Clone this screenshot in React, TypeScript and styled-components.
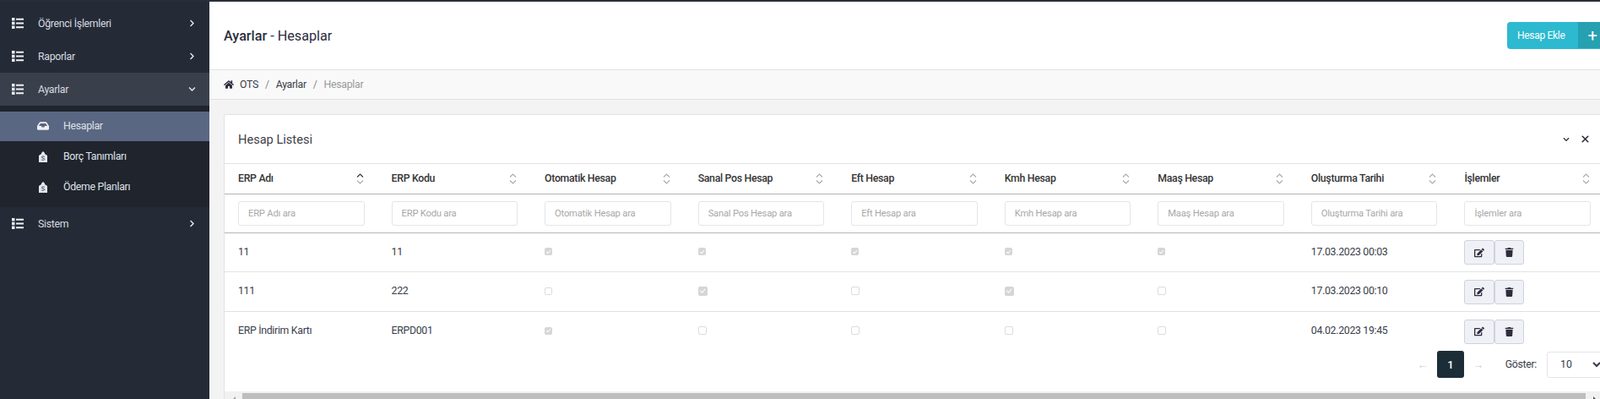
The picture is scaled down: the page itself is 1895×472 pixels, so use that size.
import styled, { createGlobalStyle } from "styled-components";
import { FaChevronDown, FaChevronRight, FaEdit, FaHome, FaInbox, FaTrash } from "react-icons/fa";
import { FiX } from "react-icons/fi";

const GlobalStyle = createGlobalStyle`
    html, body {
        margin: 0;
        height: 472px;
        overflow: hidden;
        background: #f3f3f3;
    }
    * {
        box-sizing: border-box;
    }
    body {
        font-family: Roboto, "Liberation Sans", sans-serif;
        font-size: 12.3px;
        letter-spacing: -0.3px;
        color: #333;
    }
`;

type Flag = { on: boolean; size: number };

type Account = {
    name: string;
    code: string;
    flags: Flag[];
    date: string;
};

const columns = ["ERP Adı", "ERP Kodu", "Otomatik Hesap", "Sanal Pos Hesap", "Eft Hesap", "Kmh Hesap", "Maaş Hesap", "Oluşturma Tarihi", "İşlemler"];

const accounts: Account[] = [
    {
        name: "11",
        code: "11",
        flags: [{ on: true, size: 9 }, { on: true, size: 9 }, { on: true, size: 9 }, { on: true, size: 9 }, { on: true, size: 9 }],
        date: "17.03.2023 00:03",
    },
    {
        name: "111",
        code: "222",
        flags: [{ on: false, size: 9 }, { on: true, size: 11 }, { on: false, size: 10 }, { on: true, size: 11 }, { on: false, size: 10 }],
        date: "17.03.2023 00:10",
    },
    {
        name: "ERP İndirim Kartı",
        code: "ERPD001",
        flags: [{ on: true, size: 9 }, { on: false, size: 10 }, { on: false, size: 10 }, { on: false, size: 10 }, { on: false, size: 10 }],
        date: "04.02.2023 19:45",
    },
];

function ListIcon() {
    return (
        <svg width="14" height="13" viewBox="0 0 14 13" fill="#eef0f4">
            <rect x="0" y="0" width="3.5" height="3.5" />
            <rect x="0" y="4.75" width="3.5" height="3.5" />
            <rect x="0" y="9.5" width="3.5" height="3.5" />
            <rect x="5" y="0.75" width="9" height="2" />
            <rect x="5" y="5.5" width="9" height="2" />
            <rect x="5" y="10.25" width="9" height="2" />
        </svg>
    );
}

function TagIcon() {
    return (
        <svg width="10" height="13" viewBox="0 0 10 13">
            <path d="M5 0 L7 2 L7 3 L10 5 L10 13 L0 13 L0 5 L3 3 L3 2 Z" fill="#e4e7ec" />
            <path d="M6.8 6.4 C6 5.6 3.4 5.6 3.4 7 C3.4 8.4 6.8 7.8 6.8 9.3 C6.8 10.6 4 10.6 3.2 9.8" fill="none" stroke="#4a5060" strokeWidth="1" />
        </svg>
    );
}

function SortIcon({ active }: { active: boolean }) {
    return (
        <SortSvg width="9" height="13" viewBox="0 0 9 13">
            <path d="M1 4.5 L4.5 1 L8 4.5" fill="none" stroke={active ? "#333" : "#aaa"} strokeWidth="1.1" />
            <path d="M1 8.5 L4.5 12 L8 8.5" fill="none" stroke="#aaa" strokeWidth="1.1" />
        </SortSvg>
    );
}

function App() {
    return (
        <Page>
            <GlobalStyle />
            <Sidebar>
                <MenuItem><ListIcon /><MenuLabel>Öğrenci İşlemleri</MenuLabel><FaChevronRight size={9} /></MenuItem>
                <MenuItem><ListIcon /><MenuLabel>Raporlar</MenuLabel><FaChevronRight size={9} /></MenuItem>
                <MenuItem $open><ListIcon /><MenuLabel>Ayarlar</MenuLabel><FaChevronDown size={9} /></MenuItem>
                <SubMenu>
                    <SubItem $active><SubIcon><FaInbox size={14} /></SubIcon>Hesaplar</SubItem>
                    <SubItem><SubIcon><TagIcon /></SubIcon>Borç Tanımları</SubItem>
                    <SubItem><SubIcon><TagIcon /></SubIcon>Ödeme Planları</SubItem>
                </SubMenu>
                <MenuItem><ListIcon /><MenuLabel>Sistem</MenuLabel><FaChevronRight size={9} /></MenuItem>
            </Sidebar>
            <Main>
                <Header>
                    <Title><strong>Ayarlar</strong> - Hesaplar</Title>
                    <AddButton>
                        <AddText>Hesap Ekle</AddText>
                        <AddIcon>+</AddIcon>
                    </AddButton>
                </Header>
                <Breadcrumb>
                    <FaHome size={12} color="#2c2e3e" />
                    <Crumb>OTS</Crumb>
                    <Slash>/</Slash>
                    <Crumb>Ayarlar</Crumb>
                    <Slash>/</Slash>
                    <Crumb $muted>Hesaplar</Crumb>
                </Breadcrumb>
                <Content>
                    <Card>
                        <CardHead>
                            <CardTitle>Hesap Listesi</CardTitle>
                            <CardTools>
                                <FaChevronDown size={8} />
                                <FiX size={13} strokeWidth={3} />
                            </CardTools>
                        </CardHead>
                        <Table>
                            <thead>
                                <tr>
                                    {columns.map((c, i) => (
                                        <Th key={c}>
                                            <ThInner>{c}<SortIcon active={i === 0} /></ThInner>
                                        </Th>
                                    ))}
                                </tr>
                                <tr>
                                    {columns.map((c) => (
                                        <FilterCell key={c}>
                                            <FilterInput placeholder={`${c} ara`} />
                                        </FilterCell>
                                    ))}
                                </tr>
                            </thead>
                            <tbody>
                                {accounts.map((a) => (
                                    <Row key={a.name}>
                                        <Td>{a.name}</Td>
                                        <Td>{a.code}</Td>
                                        {a.flags.map((f, i) => (
                                            <Td key={i}>
                                                <Check type="checkbox" disabled checked={f.on} readOnly $size={f.size} />
                                            </Td>
                                        ))}
                                        <Td>{a.date}</Td>
                                        <Td>
                                            <Actions>
                                                <ActionButton $wide><FaEdit size={12} /></ActionButton>
                                                <ActionButton><FaTrash size={11} /></ActionButton>
                                            </Actions>
                                        </Td>
                                    </Row>
                                ))}
                            </tbody>
                        </Table>
                        <Pagination>
                            <PageArrow>←</PageArrow>
                            <PageNumber>1</PageNumber>
                            <PageArrow>→</PageArrow>
                            <ShowLabel>Göster:</ShowLabel>
                            <ShowSelect defaultValue="10">
                                <option>10</option>
                                <option>25</option>
                                <option>50</option>
                            </ShowSelect>
                        </Pagination>
                        <ScrollTrack>
                            <ScrollArrow $side="left" />
                            <ScrollThumb />
                            <ScrollArrow $side="right" />
                        </ScrollTrack>
                    </Card>
                </Content>
            </Main>
        </Page>
    );
}

export default App;

const Page = styled.div`
    display: flex;
    width: 1920px;
    height: 472px;
    overflow: hidden;
    border-top: 2px solid #2a2e3a;
`;

const Sidebar = styled.nav`
    width: 248px;
    flex: none;
    padding-top: 6px;
    background: #252b36;
`;

const MenuItem = styled.div<{ $open?: boolean }>`
    display: flex;
    align-items: center;
    height: 39px;
    padding: 0 16px 0 14px;
    color: #e6e8ec;
    background: ${(p) => (p.$open ? "#3a404b" : "transparent")};
`;

const MenuLabel = styled.span`
    flex: 1;
    margin-left: 17px;
    color: #d8dbe2;
`;

const SubMenu = styled.div`
    padding: 7px 0 6px;
    background: #20242d;
`;

const SubItem = styled.div<{ $active?: boolean }>`
    display: flex;
    align-items: center;
    height: ${(p) => (p.$active ? "35px" : "36px")};
    padding-bottom: ${(p) => (p.$active ? "1px" : "0")};
    color: #dfe2e8;
    background: ${(p) => (p.$active ? "#5a6782" : "transparent")};
`;

const SubIcon = styled.span`
    display: flex;
    justify-content: center;
    width: 14px;
    margin: 0 17px 0 44px;
    color: #eef0f4;
`;

const Main = styled.main`
    flex: 1;
    min-width: 0;
    display: flex;
    flex-direction: column;
`;

const Header = styled.header`
    display: flex;
    align-items: center;
    justify-content: space-between;
    height: 81px;
    padding: 0 17px;
    background: #fff;
    border-bottom: 1px solid #e2e2e2;
`;

const Title = styled.h1`
    margin: 0;
    font-size: 16.2px;
    font-weight: 400;
    letter-spacing: 0;
    color: #2c2e3e;

    strong {
        font-weight: 500;
    }
`;

const AddButton = styled.button`
    display: flex;
    align-items: stretch;
    height: 32px;
    padding: 0;
    border: 0;
    border-radius: 4px;
    overflow: hidden;
    color: #fff;
    background: #2db9cf;
    font: inherit;
    letter-spacing: inherit;
`;

const AddText = styled.span`
    display: flex;
    align-items: center;
    width: 84px;
    padding-left: 12px;
    font-size: 12px;
`;

const AddIcon = styled.span`
    display: flex;
    align-items: center;
    justify-content: center;
    width: 34px;
    height: 31px;
    font-size: 20px;
    background: #26a1b2;
`;

const Breadcrumb = styled.div`
    display: flex;
    align-items: center;
    height: 35px;
    padding: 0 17px;
    background: #f9f9f9;
    border-bottom: 1px solid #e2e2e2;
`;

const Crumb = styled.span<{ $muted?: boolean }>`
    color: ${(p) => (p.$muted ? "#999" : "#3a3d4a")};

    &:first-of-type {
        margin-left: 7px;
    }
`;

const Slash = styled.span`
    margin: 0 8px;
    color: #888;
`;

const Content = styled.div`
    flex: 1;
    min-height: 0;
    padding: 17px 17px 0;
`;

const Card = styled.section`
    background: #fff;
    border: 1px solid #e2e2e2;
    border-radius: 3px 3px 0 0;
`;

const CardHead = styled.div`
    display: flex;
    align-items: center;
    justify-content: space-between;
    height: 58px;
    padding-left: 16px;
    border-bottom: 1px solid #e2e2e2;
`;

const CardTitle = styled.h3`
    margin: 0;
    font-size: 14.6px;
    font-weight: 400;
    letter-spacing: 0;
    color: #3f4047;
`;

const CardTools = styled.div`
    display: flex;
    align-items: center;
    gap: 12px;
    padding-right: 18px;
    color: #2c2e3e;
`;

const Table = styled.table`
    width: 1634px;
    table-layout: fixed;
    border-collapse: separate;
    border-spacing: 0;
`;

const Th = styled.th`
    height: 36px;
    padding: 0 16px;
    font-size: 12.3px;
    font-weight: 500;
    text-align: left;
    color: #333;
    border-bottom: 1px solid #b5b5b5;
`;

const ThInner = styled.div`
    display: flex;
    align-items: center;
    justify-content: space-between;
    margin-top: -1px;
`;

const SortSvg = styled.svg`
    margin-right: 1px;
`;

const FilterCell = styled.th`
    height: 46px;
    padding: 0 16px;
    border-bottom: 1px solid #b5b5b5;
`;

const FilterInput = styled.input`
    display: block;
    width: 100%;
    height: 29px;
    padding: 0 11px;
    border: 1px solid #e2e5ec;
    border-radius: 3px;
    outline: none;
    font: 400 11.2px Roboto, sans-serif;
    letter-spacing: -0.2px;

    &::placeholder {
        color: #a8a8a8;
    }
`;

const Row = styled.tr`
    height: 46px;

    &:nth-child(2) {
        height: 47px;
    }

    &:not(:last-child) td {
        border-bottom: 1px solid #e2e2e2;
    }
`;

const Td = styled.td`
    padding: 0 16px 2px;
    font-size: 12.3px;
    color: #3a3d4a;
`;

const Check = styled.input<{ $size: number }>`
    appearance: none;
    position: relative;
    display: block;
    width: ${(p) => p.$size}px;
    height: ${(p) => p.$size}px;
    margin: 0;
    background: #fff;
    border: 1px solid #dcdcdc;
    border-radius: 2px;

    &:checked {
        background: #d6d6d6;
        border-color: #d6d6d6;
    }

    &:checked::after {
        content: "";
        position: absolute;
        left: 30%;
        top: 8%;
        width: 30%;
        height: 60%;
        border: solid #fff;
        border-width: 0 1px 1px 0;
        transform: rotate(40deg);
    }
`;

const Actions = styled.div`
    display: flex;
    margin-top: 2px;
`;

const ActionButton = styled.button<{ $wide?: boolean }>`
    display: flex;
    align-items: center;
    justify-content: center;
    width: ${(p) => (p.$wide ? "36px" : "35px")};
    height: 29px;
    padding: 0;
    color: #2c2e3e;
    background: #f0f1f6;
    border: 1px solid #cdd2de;
    border-radius: 3px;
`;

const Pagination = styled.div`
    display: flex;
    align-items: center;
    justify-content: flex-end;
    height: 32px;
    margin-bottom: 16px;
`;

const PageArrow = styled.span`
    width: 34px;
    text-align: center;
    font-size: 13px;
    color: #cccccc;
`;

const PageNumber = styled.span`
    display: flex;
    align-items: center;
    justify-content: center;
    width: 32px;
    height: 32px;
    border-radius: 3px;
    font-size: 13px;
    font-weight: 500;
    color: #fff;
    background: #1c2d38;
`;

const ShowLabel = styled.span`
    margin: 0 12px 0 15px;
    color: #3a3d4a;
`;

const ShowSelect = styled.select`
    width: 68px;
    height: 31px;
    margin-right: 2px;
    padding-left: 11px;
    font: 400 12.3px Roboto, sans-serif;
    color: #3a3d4a;
    background: #fff;
    border: 1px solid #e2e5ec;
    border-radius: 3px;
    outline: none;
`;

const ScrollTrack = styled.div`
    display: flex;
    width: 1629px;
    height: 17px;
    padding-top: 2px;
    background: #f1f1f1;
`;

const ScrollThumb = styled.div`
    flex: 1;
    height: 15px;
    background: #bebebe;
`;

const ScrollArrow = styled.div<{ $side: "left" | "right" }>`
    flex: none;
    width: ${(p) => (p.$side === "left" ? "21px" : "17px")};
    height: 15px;
    position: relative;

    &::after {
        content: "";
        position: absolute;
        top: 4px;
        left: 9px;
        border-style: solid;
        border-width: ${(p) => (p.$side === "left" ? "4px 4px 4px 0" : "4px 0 4px 4px")};
        border-color: ${(p) => (p.$side === "left" ? "transparent #a3a3a3 transparent transparent" : "transparent transparent transparent #505050")};
    }
`;
